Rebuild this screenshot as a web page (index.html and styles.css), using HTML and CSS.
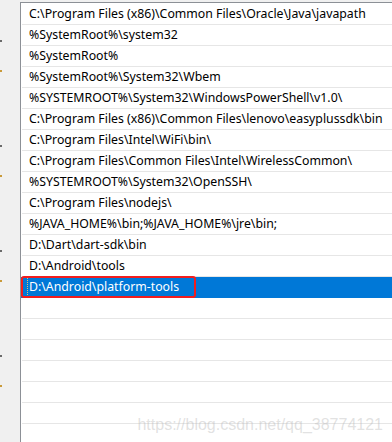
FILE: index.html
```html
<!DOCTYPE html>
<html lang="en">
<head>
  <meta charset="UTF-8" />
  <title>Edit environment variable</title>
  <link rel="stylesheet" href="styles.css">
</head>
<body>

  <div class="window">
    <div class="edge"></div>
    <div class="gutter"></div>

    <ul class="pathList">
      <li>C:\Program Files (x86)\Common Files\Oracle\Java\javapath</li>
      <li>%SystemRoot%\system32</li>
      <li>%SystemRoot%</li>
      <li>%SystemRoot%\System32\Wbem</li>
      <li>%SYSTEMROOT%\System32\WindowsPowerShell\v1.0\</li>
      <li>C:\Program Files (x86)\Common Files\lenovo\easyplussdk\bin</li>
      <li>C:\Program Files\Intel\WiFi\bin\</li>
      <li>C:\Program Files\Common Files\Intel\WirelessCommon\</li>
      <li>%SYSTEMROOT%\System32\OpenSSH\</li>
      <li>C:\Program Files\nodejs\</li>
      <li>%JAVA_HOME%\bin;%JAVA_HOME%\jre\bin;</li>
      <li>D:\Dart\dart-sdk\bin</li>
      <li>D:\Android\tools</li>
      <li class="selected"><span class="focusText">D:\Android\platform-tools</span><span class="markBox"></span></li>
      <li></li>
      <li></li>
      <li></li>
      <li></li>
      <li></li>
      <li></li>
      <li></li>
    </ul>

    <div class="watermark">https://blog.csdn.net/qq_38774121</div>
  </div>

</body>
</html>
```

FILE: styles.css
```css
html, body {
  margin: 0;
  padding: 0;
  width: 392px;
  height: 442px;
  overflow: hidden;
}

body {
  font-family: 'Noto Sans', 'Segoe UI', sans-serif;
  background-color: #f0f0f0;
  color: #000;
}

.window {
  position: relative;
  display: flex;
  height: 442px;
}

/* sliver of the window behind */
.edge {
  width: 2px;
  background: repeating-linear-gradient(180deg, #f0f0f0 0 40px, #6a6a6a 40px 42px, #f0f0f0 42px 70px, #c99a3a 70px 72px, #f0f0f0 72px 105px);
}

.gutter {
  width: 18px;
  background-color: #f0f0f0;
}

.pathList {
  flex: 1;
  list-style-type: none;
  margin: 2px 0 0;
  padding: 1px 0 0;
  background-color: #fff;
  border-top: 1px solid #8c9096;
  border-left: 1px solid #8c9096;
  overflow: hidden;
}

.pathList li {
  position: relative;
  height: 20px;
  line-height: 20px;
  padding-left: 7px;
  margin-left: 1px;
  font-size: 12.3px;
  white-space: nowrap;
  border-bottom: 1px solid #e6e6e6;
}

.pathList li.selected {
  background-color: #0078d7;
  color: #fff;
  margin-left: 0;
  padding-left: 8px;
  border-bottom-color: #0078d7;
}

.focusText {
  border-left: 1px dotted #e8c170;
  margin-left: -2px;
  padding-left: 1px;
}

.markBox {
  position: absolute;
  left: 0;
  top: -1px;
  width: 171px;
  height: 18px;
  border: 2px solid #f21d1d;
  border-radius: 3px;
}

.watermark {
  position: absolute;
  right: 9px;
  bottom: 8px;
  font-family: 'Liberation Sans', Arial, sans-serif;
  font-size: 16px;
  color: rgba(180, 180, 180, 0.4);
}
```
